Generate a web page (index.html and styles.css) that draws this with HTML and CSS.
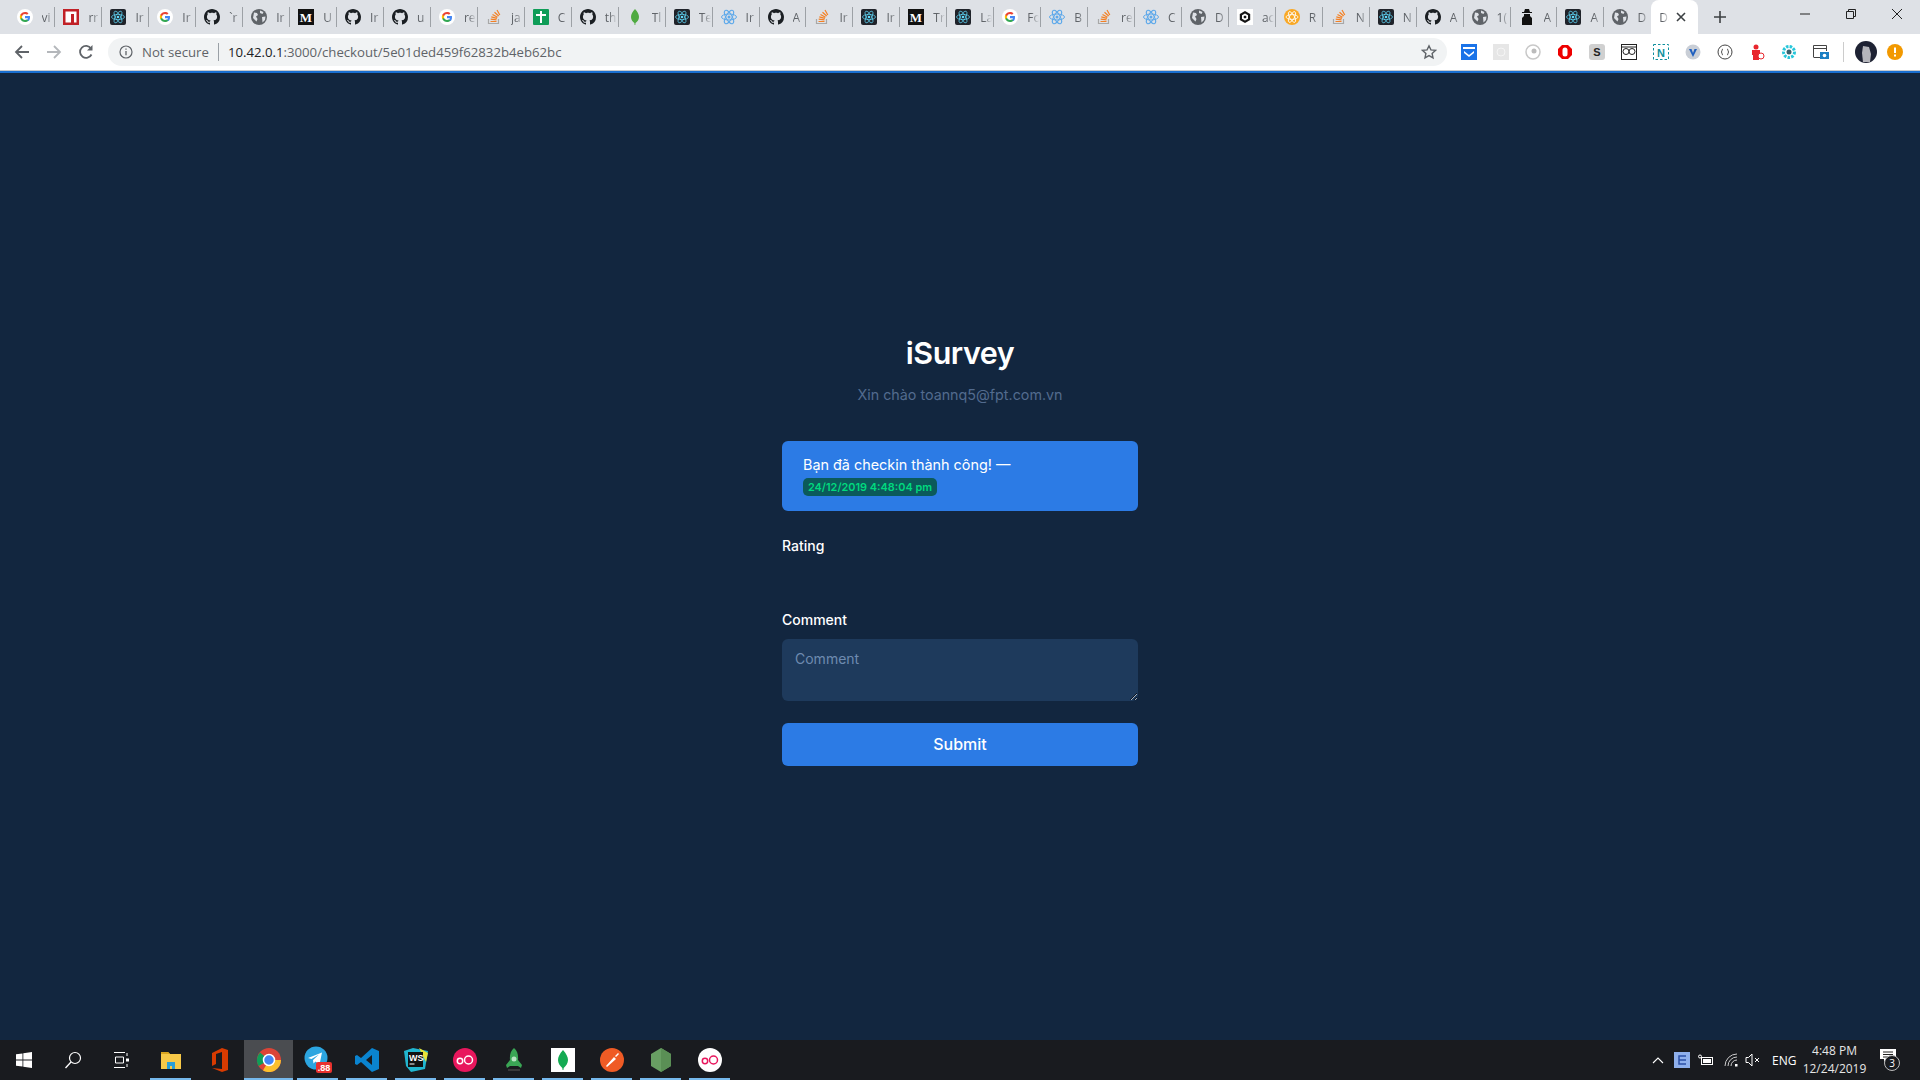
FILE: index.html
```html
<!DOCTYPE html>
<html lang="en">

<head>
    <meta charset="UTF-8">
    <meta name="viewport" content="width=device-width, initial-scale=1.0">
    <title>iSurvey</title>
    <link rel="stylesheet" href="styles.css">
</head>

<body>
    <!-- shared favicons -->
    <svg class="defs" width="0" height="0">
        <symbol id="i-g" viewBox="0 0 16 16">
            <circle cx="8" cy="8" r="8" fill="#fff" />
            <path d="M13 8.2c0-.4 0-.8-.1-1.100H8v2.100h2.900c-.1.7-.5 1.200-1.100 1.600v1.300h1.700c1-.9 1.500-2.300 1.500-3.900z" fill="#4285f4" />
            <path d="M8 13c1.400 0 2.600-.5 3.500-1.300l-1.700-1.300c-.5.3-1.100.5-1.800.5-1.400 0-2.500-.9-2.900-2.200H3.300v1.400C4.200 11.900 6 13 8 13z" fill="#34a853" />
            <path d="M5.100 8.700c-.2-.5-.2-1 0-1.500V5.800H3.300c-.6 1.200-.6 2.800 0 4.300z" fill="#fbbc05" />
            <path d="M8 5c.8 0 1.500.3 2 .8l1.500-1.500C10.600 3.500 9.400 3 8 3 6 3 4.200 4.100 3.300 5.800l1.800 1.400C5.500 5.900 6.600 5 8 5z" fill="#ea4335" />
        </symbol>
        <symbol id="i-npm" viewBox="0 0 16 16">
            <rect width="16" height="16" fill="#c12127" />
            <path d="M2.500 2.500h11v11h-2.500V5H8v8.500H2.500z" fill="#fff" />
        </symbol>
        <symbol id="i-rd" viewBox="0 0 16 16">
            <rect width="16" height="16" rx="2" fill="#20232a" />
            <g fill="none" stroke="#61dafb" stroke-width=".7">
                <ellipse cx="8" cy="8" rx="6.500" ry="2.600" />
                <ellipse cx="8" cy="8" rx="6.500" ry="2.600" transform="rotate(60 8 8)" />
                <ellipse cx="8" cy="8" rx="6.500" ry="2.600" transform="rotate(120 8 8)" />
            </g>
            <circle cx="8" cy="8" r="1.300" fill="#61dafb" />
        </symbol>
        <symbol id="i-rb" viewBox="0 0 16 16">
            <g fill="none" stroke="#5ea9ea" stroke-width="1">
                <ellipse cx="8" cy="8" rx="7.500" ry="3" />
                <ellipse cx="8" cy="8" rx="7.500" ry="3" transform="rotate(60 8 8)" />
                <ellipse cx="8" cy="8" rx="7.500" ry="3" transform="rotate(120 8 8)" />
            </g>
            <circle cx="8" cy="8" r="1.500" fill="#5ea9ea" />
        </symbol>
        <symbol id="i-gh" viewBox="0 0 16 16">
            <path fill="#1b1f23" d="M8 0C3.580 0 0 3.580 0 8c0 3.540 2.290 6.530 5.470 7.590.4.070.55-.17.55-.38 0-.19-.01-.82-.01-1.490-2.010.37-2.530-.49-2.690-.94-.09-.23-.48-.94-.82-1.130-.28-.15-.68-.52-.01-.53.63-.01 1.080.58 1.230.82.72 1.210 1.870.87 2.330.66.07-.52.28-.87.51-1.070-1.780-.2-3.640-.89-3.640-3.950 0-.87.31-1.590.82-2.150-.08-.2-.36-1.020.08-2.120 0 0 .67-.21 2.200.82.64-.18 1.320-.27 2-.27.68 0 1.360.09 2 .27 1.530-1.040 2.200-.82 2.200-.82.44 1.100.16 1.920.08 2.120.51.56.82 1.270.82 2.150 0 3.070-1.870 3.750-3.650 3.950.29.25.54.73.54 1.480 0 1.070-.01 1.930-.01 2.200 0 .21.15.46.55.38A8.013 8.013 0 0016 8c0-4.420-3.580-8-8-8z" />
        </symbol>
        <symbol id="i-globe" viewBox="0 0 16 16">
            <circle cx="8" cy="8" r="8" fill="#5f6368" />
            <path d="M3 3.500l3 .5 1 2-2 1.500 1.500 2.500-1 2.500L2 9zM9 1.500l3.500 1.500-1 2L9 4zM11 8l3.500-.5-.5 3.500-2.500 2.500z" fill="#dee1e6" />
        </symbol>
        <symbol id="i-med" viewBox="0 0 16 16">
            <rect width="16" height="16" fill="#111" />
            <text x="8" y="12.500" class="med-letter">M</text>
        </symbol>
        <symbol id="i-so" viewBox="0 0 16 16">
            <path d="M2.500 10v4.500h10V10" fill="none" stroke="#a8a8a8" stroke-width="1.200" />
            <path d="M4.500 12.500h6M4.700 10.200l5.800.6M5.300 7.800l5.600 1.500M6.500 5.500l5 2.800M8.500 3.200l4.200 3.800M11 1l2.800 5" fill="none" stroke="#f48024" stroke-width="1.200" />
        </symbol>
        <symbol id="i-cross" viewBox="0 0 16 16">
            <rect width="16" height="16" rx="1" fill="#0f9d58" />
            <path d="M3 5h4V2h2v3h4v2H9v7H7V7H3z" fill="#fff" />
        </symbol>
        <symbol id="i-leaf" viewBox="0 0 16 16">
            <path d="M8 0c2.500 3 4 5 4 8s-2 5-3.500 6l-.2 2h-.7l-.2-2C5.900 13 4 11 4 8s1.500-5 4-8z" fill="#4faa41" />
        </symbol>
        <symbol id="i-csb" viewBox="0 0 16 16">
            <rect width="16" height="16" fill="#fff" />
            <path d="M8 2l5.200 3v6L8 14l-5.200-3V5z" fill="#151515" />
            <path d="M8 4.500l3 1.700v3.600l-3 1.700-3-1.700V6.200z" fill="#fff" />
            <path d="M8 6.500l1.300.8v1.400L8 9.500l-1.300-.8V7.300z" fill="#151515" />
        </symbol>
        <symbol id="i-orange" viewBox="0 0 16 16">
            <circle cx="8" cy="8" r="8" fill="#f9a825" />
            <g fill="none" stroke="#fff" stroke-width=".8">
                <ellipse cx="8" cy="8" rx="6" ry="2.400" />
                <ellipse cx="8" cy="8" rx="6" ry="2.400" transform="rotate(60 8 8)" />
                <ellipse cx="8" cy="8" rx="6" ry="2.400" transform="rotate(120 8 8)" />
            </g>
        </symbol>
        <symbol id="i-hat" viewBox="0 0 16 16">
            <path d="M6 0h4l1 3h2v1H3V3h2zM5 5h6v2l2 2v7H3V9l2-2z" fill="#111" />
        </symbol>
    </svg>

    <div class="browser">
        <div class="tabstrip">
            <div class="tab"><svg class="fav"><use href="#i-g" /></svg><span class="tab-title">vi</span></div>
            <div class="tab"><svg class="fav"><use href="#i-npm" /></svg><span class="tab-title">rr</span></div>
            <div class="tab"><svg class="fav"><use href="#i-rd" /></svg><span class="tab-title">Ir</span></div>
            <div class="tab"><svg class="fav"><use href="#i-g" /></svg><span class="tab-title">Ir</span></div>
            <div class="tab"><svg class="fav"><use href="#i-gh" /></svg><span class="tab-title">`r</span></div>
            <div class="tab"><svg class="fav"><use href="#i-globe" /></svg><span class="tab-title">Ir</span></div>
            <div class="tab"><svg class="fav"><use href="#i-med" /></svg><span class="tab-title">U</span></div>
            <div class="tab"><svg class="fav"><use href="#i-gh" /></svg><span class="tab-title">Ir</span></div>
            <div class="tab"><svg class="fav"><use href="#i-gh" /></svg><span class="tab-title">u</span></div>
            <div class="tab"><svg class="fav"><use href="#i-g" /></svg><span class="tab-title">re</span></div>
            <div class="tab"><svg class="fav"><use href="#i-so" /></svg><span class="tab-title">ja</span></div>
            <div class="tab"><svg class="fav"><use href="#i-cross" /></svg><span class="tab-title">C</span></div>
            <div class="tab"><svg class="fav"><use href="#i-gh" /></svg><span class="tab-title">th</span></div>
            <div class="tab"><svg class="fav"><use href="#i-leaf" /></svg><span class="tab-title">Tl</span></div>
            <div class="tab"><svg class="fav"><use href="#i-rd" /></svg><span class="tab-title">Te</span></div>
            <div class="tab"><svg class="fav"><use href="#i-rb" /></svg><span class="tab-title">Ir</span></div>
            <div class="tab"><svg class="fav"><use href="#i-gh" /></svg><span class="tab-title">A</span></div>
            <div class="tab"><svg class="fav"><use href="#i-so" /></svg><span class="tab-title">Ir</span></div>
            <div class="tab"><svg class="fav"><use href="#i-rd" /></svg><span class="tab-title">Ir</span></div>
            <div class="tab"><svg class="fav"><use href="#i-med" /></svg><span class="tab-title">Tr</span></div>
            <div class="tab"><svg class="fav"><use href="#i-rd" /></svg><span class="tab-title">La</span></div>
            <div class="tab"><svg class="fav"><use href="#i-g" /></svg><span class="tab-title">Fo</span></div>
            <div class="tab"><svg class="fav"><use href="#i-rb" /></svg><span class="tab-title">B</span></div>
            <div class="tab"><svg class="fav"><use href="#i-so" /></svg><span class="tab-title">re</span></div>
            <div class="tab"><svg class="fav"><use href="#i-rb" /></svg><span class="tab-title">C</span></div>
            <div class="tab"><svg class="fav"><use href="#i-globe" /></svg><span class="tab-title">D</span></div>
            <div class="tab"><svg class="fav"><use href="#i-csb" /></svg><span class="tab-title">ac</span></div>
            <div class="tab"><svg class="fav"><use href="#i-orange" /></svg><span class="tab-title">R</span></div>
            <div class="tab"><svg class="fav"><use href="#i-so" /></svg><span class="tab-title">N</span></div>
            <div class="tab"><svg class="fav"><use href="#i-rd" /></svg><span class="tab-title">N</span></div>
            <div class="tab"><svg class="fav"><use href="#i-gh" /></svg><span class="tab-title">A</span></div>
            <div class="tab"><svg class="fav"><use href="#i-globe" /></svg><span class="tab-title">1(</span></div>
            <div class="tab"><svg class="fav"><use href="#i-hat" /></svg><span class="tab-title">A</span></div>
            <div class="tab"><svg class="fav"><use href="#i-rd" /></svg><span class="tab-title">A</span></div>
            <div class="tab no-sep"><svg class="fav"><use href="#i-globe" /></svg><span class="tab-title">D</span></div>
            <div class="tab-active">
                <span class="tab-title">Da</span>
                <svg class="tab-close" width="10" height="10" viewBox="0 0 10 10"><path d="M1 1l8 8M9 1l-8 8" stroke="#3c4043" stroke-width="1.600" /></svg>
            </div>
            <svg class="new-tab" width="14" height="14" viewBox="0 0 14 14"><path d="M7 1v12M1 7h12" stroke="#3c4043" stroke-width="1.600" /></svg>
            <div class="win-controls">
                <svg width="46" height="28" viewBox="0 0 46 28"><path d="M18 14h10" stroke="#222" /></svg>
                <svg width="46" height="28" viewBox="0 0 46 28"><path d="M18.500 11.500h7v7h-7zM20.500 11.500v-2h7v7h-2" fill="none" stroke="#222" /></svg>
                <svg width="46" height="28" viewBox="0 0 46 28"><path d="M18 9l10 10M28 9L18 19" stroke="#222" /></svg>
            </div>
        </div>

        <div class="toolbar">
            <svg class="nav-btn" width="16" height="16" viewBox="0 0 16 16"><path d="M15 8H2M8 2L2 8l6 6" fill="none" stroke="#5f6368" stroke-width="1.800" /></svg>
            <svg class="nav-btn" width="16" height="16" viewBox="0 0 16 16"><path d="M1 8h13M8 2l6 6-6 6" fill="none" stroke="#b4b7bb" stroke-width="1.800" /></svg>
            <svg class="nav-btn" width="16" height="16" viewBox="0 0 16 16"><path d="M13.500 10.500A6 6 0 1 1 13 4.500" fill="none" stroke="#5f6368" stroke-width="1.800" /><path d="M14.500 1v5.500H9z" fill="#5f6368" /></svg>
            <div class="omnibox">
                <svg width="14" height="14" viewBox="0 0 14 14"><circle cx="7" cy="7" r="6" fill="none" stroke="#5f6368" stroke-width="1.200" /><path d="M7 6v4.200M7 3.500v1.300" stroke="#5f6368" stroke-width="1.300" /></svg>
                <span class="not-secure">Not secure</span>
                <span class="omni-sep"></span>
                <span class="url"><b>10.42.0.1</b>:3000/checkout/5e01ded459f62832b4eb62bc</span>
                <svg class="star" width="16" height="16" viewBox="0 0 16 16"><path d="M8 1.800l1.900 4.100 4.500.5-3.300 3 .9 4.400L8 11.600l-4 2.200.9-4.400-3.300-3 4.500-.5z" fill="none" stroke="#5f6368" stroke-width="1.400" /></svg>
            </div>
            <div class="extensions">
                <svg viewBox="0 0 16 16"><rect width="16" height="16" fill="#1a73e8" /><path d="M2 3h12v2H2zM3 7l5 4 5-4v2l-5 4-5-4z" fill="#fff" /></svg>
                <svg viewBox="0 0 16 16"><rect width="16" height="16" fill="#e6e6e6" /><circle cx="8" cy="8" r="4" fill="none" stroke="#f5f5f5" /></svg>
                <svg viewBox="0 0 16 16"><circle cx="8" cy="8" r="7" fill="none" stroke="#c8c8c8" stroke-width="1.500" /><circle cx="9" cy="7" r="2.500" fill="#bbb" /></svg>
                <svg viewBox="0 0 16 16"><path d="M5 1h6l4 4v6l-4 4H5l-4-4V5z" fill="#e00" /><rect x="5.500" y="3.500" width="5" height="9" rx="2.500" fill="#fff" /></svg>
                <svg viewBox="0 0 16 16"><rect width="16" height="16" rx="3" fill="#d0d0d0" /><text x="8" y="12" class="ext-letter">S</text></svg>
                <svg viewBox="0 0 16 16"><rect x=".5" y=".5" width="15" height="15" fill="#fff" stroke="#222" /><circle cx="5" cy="7.500" r="3" fill="none" stroke="#222" /><circle cx="11" cy="7.500" r="3" fill="none" stroke="#222" /><path d="M1 3h14" stroke="#222" /></svg>
                <svg viewBox="0 0 16 16"><rect x=".5" y=".5" width="15" height="15" fill="none" stroke="#0e8f9c" stroke-dasharray="2.500 2" /><text x="8" y="12.500" class="ext-letter ext-teal">N</text></svg>
                <svg viewBox="0 0 16 16"><circle cx="8" cy="8" r="7.500" fill="#c9ced6" /><path d="M4 5l4 8 4-8h-2.500L8 9 6.500 5z" fill="#1f5fbf" /></svg>
                <svg viewBox="0 0 16 16"><circle cx="8" cy="8" r="7" fill="#fff" stroke="#444" /><path d="M6 5c-1.500 0-.5 3-2 3 1.500 0 .5 3 2 3M10 5c1.500 0 .5 3 2 3-1.500 0-.5 3-2 3" fill="none" stroke="#444" /></svg>
                <svg viewBox="0 0 16 16"><circle cx="7" cy="3" r="2.500" fill="#e8262d" /><path d="M3 6h8v5h-1v5H4v-5H3z" fill="#e8262d" /><circle cx="12" cy="12" r="3" fill="#fff" stroke="#e8262d" /></svg>
                <svg viewBox="0 0 16 16"><circle cx="8" cy="8" r="5.500" fill="#fff" stroke="#26c6da" stroke-width="3" stroke-dasharray="2.500 1.200" /><circle cx="8" cy="8" r="2.500" fill="#37606b" /></svg>
                <svg viewBox="0 0 16 16"><path d="M.5 13V1.500h13V7M.5 4.500h13M.5 13.500H7" fill="none" stroke="#444" /><rect x="7" y="8" width="9" height="7" fill="#1a7fc4" /><circle cx="11.500" cy="11.500" r="1.800" fill="#fff" /></svg>
            </div>
            <span class="toolbar-sep"></span>
            <svg class="avatar" width="22" height="22" viewBox="0 0 22 22"><circle cx="11" cy="11" r="11" fill="#1e2233" /><path d="M8 5l6 1 2 7-1 8H8l-1-9z" fill="#b5b5bb" /></svg>
            <svg class="warn" width="16" height="16" viewBox="0 0 16 16"><circle cx="8" cy="8" r="8" fill="#f29900" /><path d="M8 3.500v5.500M8 10.500v2" stroke="#fff" stroke-width="2" /></svg>
        </div>
        <div class="loadbar"></div>
    </div>

    <main class="page">
        <h1 class="brand">iSurvey</h1>
        <p class="greeting">Xin chào toannq5@fpt.com.vn</p>

        <div class="alert">
            <div>Bạn đã checkin thành công! —</div>
            <span class="badge">24/12/2019 4:48:04 pm</span>
        </div>

        <form class="survey">
            <label class="rating-label">Rating</label>
            <label class="comment-label" for="comment">Comment</label>
            <textarea id="comment" class="comment" placeholder="Comment"></textarea>
            <button type="button" class="submit">Submit</button>
        </form>
    </main>

    <footer class="taskbar">
        <div class="task-item">
            <svg width="16" height="16" viewBox="0 0 16 16"><path d="M0 2.300l6.500-.9v6.200H0zM7.300 1.300L16 0v7.600H7.300zM0 8.400h6.500v6.200L0 13.700zM7.300 8.400H16V16l-8.700-1.300z" fill="#fff" /></svg>
        </div>
        <div class="task-item">
            <svg width="18" height="18" viewBox="0 0 18 18"><circle cx="11" cy="7" r="5.500" fill="none" stroke="#fff" stroke-width="1.200" /><path d="M7 11l-5.500 6" stroke="#fff" stroke-width="1.300" /></svg>
        </div>
        <div class="task-item">
            <svg width="16" height="16" viewBox="0 0 16 16"><path d="M0 .5h11M0 15.500h11M1.500 5h8v6h-8z" fill="none" stroke="#fff" /><path d="M13 1v3M13 12v3" stroke="#fff" /><rect x="12" y="6.500" width="3" height="3" fill="#fff" /></svg>
        </div>
        <div class="task-item open">
            <svg width="22" height="22" viewBox="0 0 22 22"><path d="M1 3h7l2 2h11v15H1z" fill="#f7c948" /><path d="M1 3h7l2 2H1z" fill="#d9a520" /><path d="M7 20v-7h8v7h-3v-3h-2v3z" fill="#2a9fd6" /></svg>
        </div>
        <div class="task-item">
            <svg width="20" height="24" viewBox="0 0 20 24"><path d="M2 5l10-5 6 2v20l-6 2-10-4 10 1V4L6 6v10l-4 2z" fill="#d83b01" /></svg>
        </div>
        <div class="task-item open active">
            <svg width="24" height="24" viewBox="0 0 24 24"><circle cx="12" cy="12" r="12" fill="#db4437" /><path d="M12 12L1.600 18A12 12 0 0 1 3 4.500z" fill="#0f9d58" /><path d="M12 12h12a12 12 0 0 1-18 10.400z" fill="#fbc02d" /><circle cx="12" cy="12" r="5.500" fill="#4285f4" stroke="#fff" stroke-width="1.500" /></svg>
        </div>
        <div class="task-item open">
            <svg width="30" height="30" viewBox="0 0 30 30"><circle cx="13" cy="13" r="11.500" fill="#2ca5e0" /><path d="M5 13l14-5.500-2.500 12-4-3-2 2-.5-3.500 6-5.500-7.500 4.500z" fill="#fff" /><rect x="13" y="17" width="16" height="11" rx="2" fill="#e8312f" /><text x="21" y="26" class="tg-count">.88</text></svg>
        </div>
        <div class="task-item open">
            <svg width="24" height="24" viewBox="0 0 24 24"><path d="M17 0l7 3v18l-7 3L6 14l-4 3-2-1V8l2-1 4 3zm0 7l-6 5 6 5z" fill="#0a84d0" /></svg>
        </div>
        <div class="task-item open">
            <svg width="24" height="24" viewBox="0 0 24 24"><path d="M0 3l9-3 15 3-3 18-14 3-5-6z" fill="#21b6d0" /><path d="M15 0l9 5-2 9z" fill="#e8e337" /><rect x="4" y="4" width="15" height="15" fill="#111" /><text x="5" y="12.500" class="ws-letter">WS</text><rect x="5.500" y="15.500" width="5" height="1" fill="#fff" /></svg>
        </div>
        <div class="task-item open">
            <svg width="24" height="24" viewBox="0 0 24 24"><circle cx="12" cy="12" r="12" fill="#e8175d" /><circle cx="7" cy="13" r="2.700" fill="none" stroke="#fff" stroke-width="1.500" /><circle cx="15.500" cy="12" r="4" fill="none" stroke="#fff" stroke-width="1.500" /></svg>
        </div>
        <div class="task-item open">
            <svg width="20" height="24" viewBox="0 0 20 24"><path d="M10 0c3.500 3 4.500 7 4 12l4 5-1 3-3-2H6l-3 2-1-3 4-5C5.500 7 6.500 3 10 0z" fill="#3aa655" /><circle cx="10" cy="11" r="2.500" fill="#b9e3c4" /><path d="M4 22h12" stroke="#444" stroke-width="1.500" /></svg>
        </div>
        <div class="task-item open">
            <svg width="24" height="24" viewBox="0 0 24 24"><rect width="24" height="24" fill="#fff" /><path d="M12 2c3.500 4 5 7 5 10s-2 6-4.300 8l-.3 2h-.8l-.3-2C9 18 7 15 7 12s1.500-6 5-10z" fill="#13aa52" /></svg>
        </div>
        <div class="task-item open">
            <svg width="24" height="24" viewBox="0 0 24 24"><circle cx="12" cy="12" r="12" fill="#ef5b25" /><path d="M6 18l8-9 2 2-9 8zM15 8l3-3 1 1-3 3z" fill="#fff" /></svg>
        </div>
        <div class="task-item open">
            <svg width="22" height="24" viewBox="0 0 22 24"><path d="M11 0l10 6v12l-10 6L1 18V6z" fill="#689f63" /><path d="M11 0l10 6v12l-10 6z" fill="#5a8f55" /></svg>
        </div>
        <div class="task-item open">
            <svg width="24" height="24" viewBox="0 0 24 24"><circle cx="12" cy="12" r="12" fill="#fff" /><circle cx="7" cy="13" r="2.700" fill="none" stroke="#e8175d" stroke-width="1.500" /><circle cx="15.500" cy="12" r="4" fill="none" stroke="#e8175d" stroke-width="1.500" /></svg>
        </div>

        <div class="tray">
            <svg class="tray-chevron" width="12" height="8" viewBox="0 0 12 8"><path d="M1 7l5-5 5 5" fill="none" stroke="#fff" stroke-width="1.100" /></svg>
            <svg class="tray-e" width="16" height="16" viewBox="0 0 16 16"><rect width="16" height="16" fill="#8fb0ec" /><path d="M12 4H5v8h7M5 8h7" fill="none" stroke="#2b4fa5" stroke-width="1.500" /></svg>
            <svg class="tray-batt" width="16" height="12" viewBox="0 0 16 12"><rect x="3.500" y="3.500" width="11" height="7" fill="none" stroke="#fff" /><rect x="5" y="5" width="8" height="4" fill="#fff" /><circle cx="2" cy="2.500" r="1.500" fill="none" stroke="#fff" /></svg>
            <svg class="tray-wifi" width="14" height="14" viewBox="0 0 14 14"><path d="M1 13A12 12 0 0 1 13 1M4 13a9 9 0 0 1 9-9M7 13a6 6 0 0 1 6-6" fill="none" stroke="#ccc" /><rect x="11" y="11" width="2.500" height="2.500" fill="#fff" /></svg>
            <svg class="tray-sound" width="16" height="14" viewBox="0 0 16 14"><path d="M1 4.500h2.500L7 1v12L3.500 9.500H1z" fill="none" stroke="#fff" /><path d="M10 5l4 4M14 5l-4 4" stroke="#fff" /></svg>
            <span class="tray-lang">ENG</span>
            <div class="clock">
                <div>4:48 PM</div>
                <div>12/24/2019</div>
            </div>
            <div class="notif">
                <svg width="16" height="14" viewBox="0 0 16 14"><path d="M0 0h16v10H7l-3 3v-3H0z" fill="#fff" /><path d="M3 3h10M3 5.500h10M3 8h7" stroke="#222" /></svg>
                <span class="notif-count">3</span>
            </div>
        </div>
    </footer>
</body>

</html>
```

FILE: styles.css
```css
*,
*:before,
*:after {
    box-sizing: border-box;
}

html,
body {
    height: 100%;
}

body {
    margin: 0;
    display: flex;
    flex-direction: column;
    overflow: hidden;
    background-color: #12263f;
    font-family: "Inter", "Noto Sans", sans-serif;
}

.defs {
    position: absolute;
}

svg {
    display: block;
    flex: none;
}

/* browser chrome */

.browser {
    flex: none;
    background-color: #fff;
    font-family: "Open Sans", "Liberation Sans", sans-serif;
}

.tabstrip {
    display: flex;
    align-items: center;
    height: 34px;
    padding-left: 8.5px;
    background-color: #dee1e6;
}

.tab {
    display: flex;
    align-items: center;
    flex: none;
    width: 46.95px;
    height: 20px;
    padding-left: 8px;
    border-right: 1px solid #9da1a6;
}

.tab.no-sep {
    border-right: 0;
}

.fav {
    width: 16px;
    height: 16px;
}

.tab-title {
    width: 12px;
    margin-left: 9px;
    overflow: hidden;
    font-size: 12px;
    white-space: nowrap;
    color: #5f6368;
    -webkit-mask-image: linear-gradient(to right, #000 35%, transparent 100%);
    mask-image: linear-gradient(to right, #000 35%, transparent 100%);
}

.tab-active {
    display: flex;
    align-items: center;
    flex: none;
    width: 47px;
    height: 34px;
    padding-left: 8px;
    border-radius: 8px 8px 0 0;
    background-color: #fff;
}

.tab-active .tab-title {
    width: 10px;
    margin-left: 0;
}

.tab-close {
    margin-left: 7px;
}

.new-tab {
    margin-left: 15px;
}

.win-controls {
    display: flex;
    align-self: flex-start;
    margin-left: auto;
}

.toolbar {
    display: flex;
    align-items: center;
    height: 37px;
    padding: 0 14px 1px 14px;
    border-bottom: 1px solid #c8cacd;
}

.nav-btn {
    margin-right: 16px;
}

.omnibox {
    display: flex;
    align-items: center;
    width: 1339px;
    height: 28px;
    margin-left: -2px;
    padding: 0 10px 0 11px;
    border-radius: 14px;
    background-color: #f1f3f4;
    font-size: 13.2px;
}

.not-secure {
    margin-left: 9px;
    color: #5f6368;
}

.omni-sep {
    width: 1px;
    height: 18px;
    margin: 0 9px;
    background-color: #9aa0a6;
}

.url {
    color: #5f6368;
}

.url b {
    font-weight: 400;
    color: #202124;
}

.star {
    margin-left: auto;
}

.extensions {
    display: flex;
    gap: 16px;
    margin-left: 14px;
}

.extensions svg {
    width: 16px;
    height: 16px;
}

.med-letter {
    font-family: "Liberation Serif", serif;
    font-size: 13px;
    font-weight: 700;
    text-anchor: middle;
    fill: #fff;
}

.ext-letter {
    font-family: "Liberation Sans", sans-serif;
    font-size: 11px;
    font-weight: 700;
    text-anchor: middle;
    fill: #222;
}

.ext-teal {
    fill: #0e8f9c;
}

.toolbar-sep {
    width: 1px;
    height: 20px;
    margin-left: 14px;
    background-color: #ccc;
}

.avatar {
    margin-left: 11px;
}

.warn {
    margin-left: 10px;
}

.loadbar {
    height: 2px;
    background-color: #1a6fd0;
}

/* page */

.page {
    flex: 1;
    display: flex;
    flex-direction: column;
    align-items: center;
    padding-top: 260px;
}

.brand {
    margin: 0;
    font-size: 30.5px;
    line-height: 40px;
    font-weight: 600;
    letter-spacing: -0.5px;
    color: #fff;
}

.greeting {
    margin: 11px 0 0 0;
    font-size: 14.3px;
    line-height: 22px;
    color: #526b8e;
}

.alert {
    width: 356px;
    height: 70px;
    margin-top: 35px;
    padding: 14px 21px;
    border-radius: 6px;
    background-color: #2c7be5;
    font-size: 14.4px;
    line-height: 20px;
    color: #fff;
}

.badge {
    display: inline-block;
    height: 18px;
    margin-top: 3px;
    padding: 0 5px;
    border-radius: 5px;
    background-color: #0b5a5a;
    font-size: 10.9px;
    line-height: 18px;
    font-weight: 600;
    color: #00d97e;
    vertical-align: top;
}

.survey {
    display: flex;
    flex-direction: column;
    width: 356px;
}

.rating-label,
.comment-label {
    font-size: 14px;
    line-height: 20px;
    font-weight: 500;
    color: #fff;
}

.rating-label {
    margin-top: 25px;
}

.comment-label {
    margin-top: 54px;
}

.comment {
    height: 62px;
    margin-top: 9px;
    padding: 10px 13px;
    border: 0;
    border-radius: 6px;
    outline: none;
    background-color: #1e3a5c;
    font-family: inherit;
    font-size: 14px;
    line-height: 20px;
    color: #fff;
}

.comment::placeholder {
    color: #6e8bb0;
}

.submit {
    height: 43px;
    margin-top: 22px;
    border: 0;
    border-radius: 6px;
    background-color: #2c7be5;
    font-family: inherit;
    font-size: 16px;
    font-weight: 500;
    line-height: 40px;
    padding: 0 0 2px 0;
    color: #fff;
}

/* taskbar */

.taskbar {
    flex: none;
    display: flex;
    align-items: stretch;
    height: 40px;
    background-color: #191b1f;
}

.task-item {
    display: flex;
    align-items: center;
    justify-content: center;
    flex: none;
    width: 49px;
    height: 40px;
}

.task-item:first-child {
    margin-left: -1px;
}

.task-item.open {
    box-shadow: inset 4px 0 0 #191b1f, inset -4px 0 0 #191b1f, inset 0 -2px 0 #76b9ed;
}

.task-item.active {
    background-color: #4a4c50;
    box-shadow: inset 0 -2px 0 #76b9ed;
}

.tg-count {
    font-family: "Liberation Sans", sans-serif;
    font-size: 9px;
    font-weight: 700;
    text-anchor: middle;
    fill: #fff;
}

.ws-letter {
    font-family: "Liberation Sans", sans-serif;
    font-size: 9px;
    font-weight: 700;
    fill: #fff;
}

.tray {
    display: flex;
    align-items: center;
    margin-left: auto;
    color: #fff;
    font-family: "Open Sans", "Liberation Sans", sans-serif;
    font-size: 12px;
}

.tray-e {
    margin-left: 9.5px;
}

.tray-batt {
    margin-left: 8px;
}

.tray-wifi {
    margin-left: 10px;
}

.tray-sound {
    margin-left: 7px;
}

.tray-lang {
    margin-left: 11.5px;
}

.clock {
    width: 72px;
    margin-left: 2px;
    text-align: center;
    font-size: 12px;
    line-height: 18px;
    color: #e6e6e6;
}

.notif {
    position: relative;
    width: 30px;
    height: 40px;
    margin-left: 2.5px;
    margin-right: 17px;
    padding: 9px 0 0 7px;
}

/* count bubble sits over the message icon */
.notif-count {
    position: absolute;
    right: 3px;
    top: 15px;
    width: 16px;
    height: 16px;
    border: 1px solid #bbb;
    border-radius: 50%;
    background-color: #191b1f;
    font-size: 10px;
    line-height: 14px;
    text-align: center;
}
```
